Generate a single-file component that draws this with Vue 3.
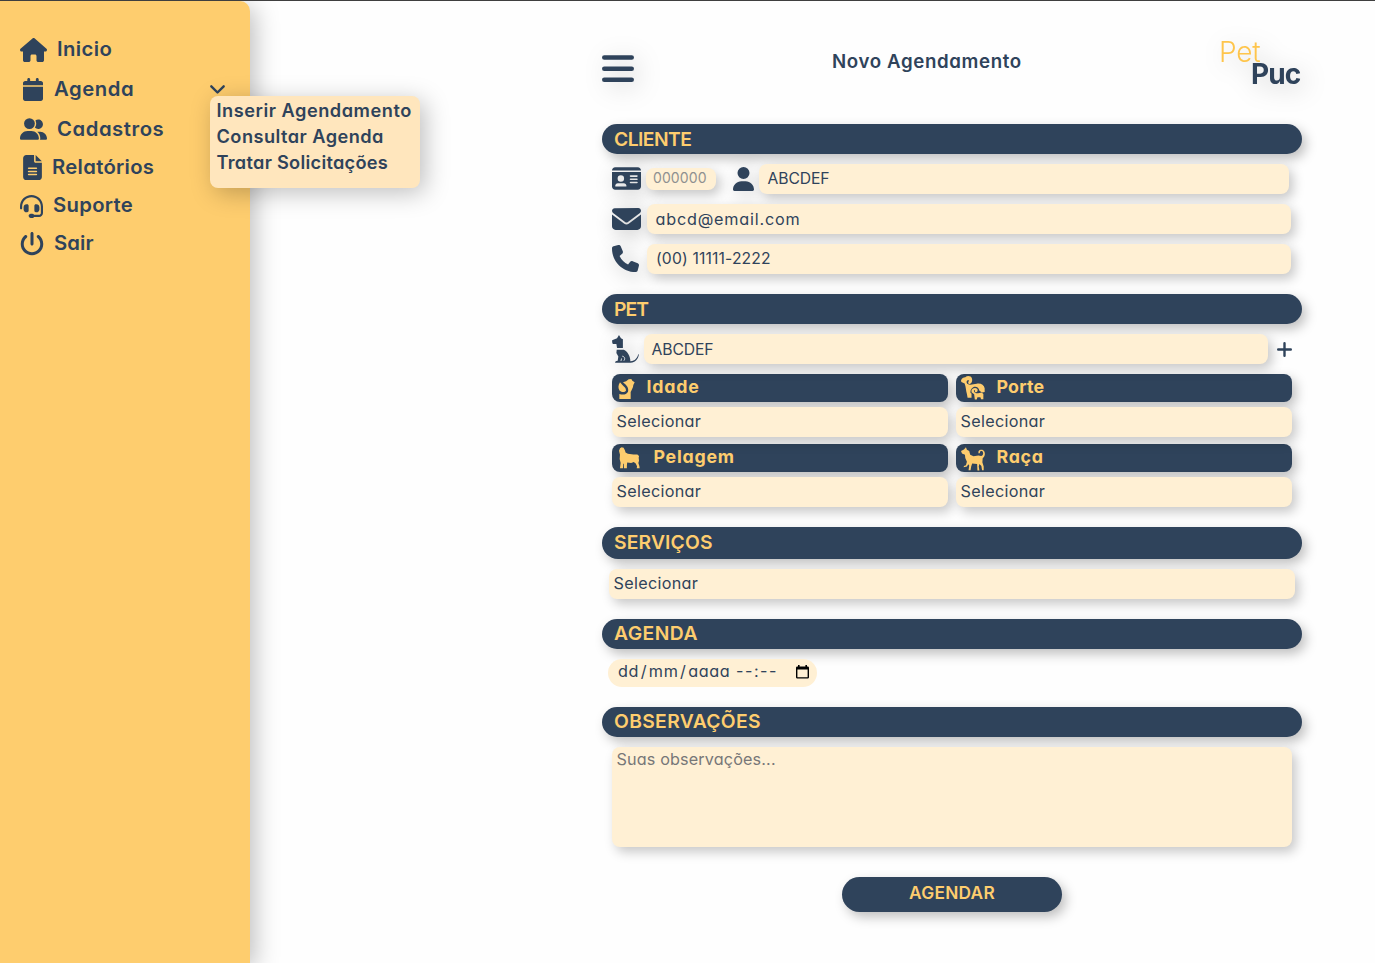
<script setup>
const menu = [
  { key: 'inicio', label: 'Inicio', view: '0 0 576 512', path: 'M575.8 255.5c0 18-15 32.1-32 32.1l-32 0 .7 160.2c0 2.7-.2 5.4-.5 8.1l0 16.2c0 22.1-17.9 40-40 40l-16 0c-1.1 0-2.2 0-3.3-.1c-1.4 .1-2.8 .1-4.2 .1L416 512l-24 0c-22.1 0-40-17.9-40-40l0-24 0-64c0-17.7-14.3-32-32-32l-64 0c-17.7 0-32 14.3-32 32l0 64 0 24c0 22.1-17.9 40-40 40l-24 0-31.9 0c-1.5 0-3-.1-4.5-.2c-1.2 .1-2.4 .2-3.6 .2l-16 0c-22.1 0-40-17.9-40-40l0-112c0-.9 0-1.9 .1-2.8l0-69.7-32 0c-18 0-32-14-32-32.1c0-9 3-17 10-24L266.4 8c7-7 15-8 22-8s15 2 21 7L564.8 231.5c8 7 12 15 11 24z' },
  { key: 'agenda', label: 'Agenda', open: true, view: '0 0 448 512', path: 'M96 32l0 32L48 64C21.5 64 0 85.5 0 112l0 48 448 0 0-48c0-26.5-21.5-48-48-48l-48 0 0-32c0-17.7-14.3-32-32-32s-32 14.3-32 32l0 32L160 64l0-32c0-17.7-14.3-32-32-32S96 14.3 96 32zM448 192L0 192 0 464c0 26.5 21.5 48 48 48l352 0c26.5 0 48-21.5 48-48l0-272z' },
  { key: 'cadastros', label: 'Cadastros', view: '0 0 640 512', path: 'M96 128a128 128 0 1 1 256 0A128 128 0 1 1 96 128zM0 482.3C0 383.8 79.8 304 178.3 304l91.4 0C368.2 304 448 383.8 448 482.3c0 16.4-13.3 29.7-29.7 29.7L29.7 512C13.3 512 0 498.7 0 482.3zM609.3 512l-137.8 0c5.4-9.4 8.6-20.3 8.6-32l0-8c0-60.7-27.1-115.2-69.8-151.8c2.4-.1 4.7-.2 7.1-.2l61.4 0C567.8 320 640 392.2 640 481.3c0 17-13.8 30.7-30.7 30.7zM432 256c-31 0-59-12.6-79.3-32.9C372.4 196.5 384 163.6 384 128c0-26.8-6.6-52.1-18.3-74.3C384.3 40.1 407.2 32 432 32c61.9 0 112 50.1 112 112s-50.1 112-112 112z' },
  { key: 'relatorios', label: 'Relatórios', view: '0 0 384 512', path: 'M64 0C28.7 0 0 28.7 0 64L0 448c0 35.3 28.7 64 64 64l256 0c35.3 0 64-28.7 64-64l0-288-128 0c-17.7 0-32-14.3-32-32L224 0 64 0zM256 0l0 128 128 0L256 0zM112 256l160 0c8.8 0 16 7.2 16 16s-7.2 16-16 16l-160 0c-8.8 0-16-7.2-16-16s7.2-16 16-16zm0 64l160 0c8.8 0 16 7.2 16 16s-7.2 16-16 16l-160 0c-8.8 0-16-7.2-16-16s7.2-16 16-16zm0 64l160 0c8.8 0 16 7.2 16 16s-7.2 16-16 16l-160 0c-8.8 0-16-7.2-16-16s7.2-16 16-16z' },
  { key: 'suporte', label: 'Suporte', view: '0 0 512 512', path: 'M256 48C141.1 48 48 141.1 48 256l0 40c0 13.3-10.7 24-24 24s-24-10.7-24-24l0-40C0 114.6 114.6 0 256 0S512 114.6 512 256l0 144.1c0 48.6-39.4 88-88.1 88L313.6 488c-8.3 14.3-23.8 24-41.6 24l-32 0c-26.5 0-48-21.5-48-48s21.5-48 48-48l32 0c17.8 0 33.3 9.7 41.6 24l110.4 .1c22.1 0 40-17.9 40-40L464 256c0-114.9-93.1-208-208-208zM144 208l16 0c17.7 0 32 14.3 32 32l0 112c0 17.7-14.3 32-32 32l-16 0c-35.3 0-64-28.7-64-64l0-48c0-35.3 28.7-64 64-64zm224 0c35.3 0 64 28.7 64 64l0 48c0 35.3-28.7 64-64 64l-16 0c-17.7 0-32-14.3-32-32l0-112c0-17.7 14.3-32 32-32l16 0z' },
  { key: 'sair', label: 'Sair', view: '0 0 512 512', path: 'M288 32c0-17.7-14.3-32-32-32s-32 14.3-32 32l0 224c0 17.7 14.3 32 32 32s32-14.3 32-32l0-224zM143.5 120.6c13.6-11.3 15.4-31.5 4.1-45.1s-31.5-15.4-45.1-4.1C49.7 115.4 16 181.8 16 256c0 132.5 107.5 240 240 240s240-107.5 240-240c0-74.2-33.8-140.6-86.6-184.6c-13.6-11.3-33.8-9.4-45.1 4.1s-9.4 33.8 4.1 45.1c38.9 32.3 63.5 81 63.5 135.4c0 97.2-78.8 176-176 176s-176-78.8-176-176c0-54.4 24.7-103.1 63.5-135.4z' },
]
</script>

<template>
  <div class="page">
    <nav class="sidebar">
      <div v-for="item in menu" :key="item.key" class="item" :class="item.key">
        <svg class="glyph" :viewBox="item.view"><path :d="item.path" /></svg>
        <span class="label">{{ item.label }}</span>
        <svg v-if="item.open" class="chevron" viewBox="0 0 15 9"><path d="M1.3 1.3 7.5 7.5 13.7 1.3" /></svg>
        <div v-if="item.open" class="submenu">
          <span class="s1">Inserir Agendamento</span>
          <span class="s2">Consultar Agenda</span>
          <span class="s3">Tratar Solicitações</span>
        </div>
      </div>
    </nav>

    <main class="panel">
      <header class="top">
        <svg class="burger" viewBox="0 0 32 28"><path d="M2.3 2.5H29.7M2.3 13.7H29.7M2.3 24.8H29.7" /></svg>
        <h1>Novo Agendamento</h1>
        <div class="logo"><span class="pet">Pet</span><span class="puc">Puc</span></div>
      </header>

      <h2 class="cliente"><span>CLIENTE</span></h2>
      <div class="row first">
        <svg class="ic card" viewBox="0 32 576 448"><path d="M0 96l576 0c0-35.3-28.7-64-64-64L64 32C28.7 32 0 60.7 0 96zm0 32L0 416c0 35.3 28.7 64 64 64l448 0c35.3 0 64-28.7 64-64l0-288L0 128zM64 405.3c0-29.5 23.9-53.3 53.3-53.3l117.3 0c29.5 0 53.3 23.9 53.3 53.3c0 5.9-4.8 10.7-10.7 10.7L74.7 416c-5.9 0-10.7-4.8-10.7-10.7zM176 192a64 64 0 1 1 0 128 64 64 0 1 1 0-128zm176 16c0-8.8 7.2-16 16-16l128 0c8.8 0 16 7.2 16 16s-7.2 16-16 16l-128 0c-8.8 0-16-7.2-16-16zm0 64c0-8.8 7.2-16 16-16l128 0c8.8 0 16 7.2 16 16s-7.2 16-16 16l-128 0c-8.8 0-16-7.2-16-16zm0 64c0-8.8 7.2-16 16-16l128 0c8.8 0 16 7.2 16 16s-7.2 16-16 16l-128 0c-8.8 0-16-7.2-16-16z" /></svg>
        <div class="field code">000000</div>
        <svg class="ic user" viewBox="0 0 448 512"><path d="M224 256A128 128 0 1 0 224 0a128 128 0 1 0 0 256zm-45.7 48C79.8 304 0 383.8 0 482.3C0 498.7 13.3 512 29.7 512l388.6 0c16.4 0 29.7-13.3 29.7-29.7C448 383.8 368.2 304 269.7 304l-91.4 0z" /></svg>
        <div class="field name">ABCDEF</div>
      </div>
      <div class="row second">
        <svg class="ic mail" viewBox="0 64 512 384"><path d="M48 64C21.5 64 0 85.5 0 112c0 15.1 7.1 29.3 19.2 38.4L236.8 313.6c11.4 8.5 27 8.5 38.4 0L492.8 150.4c12.1-9.1 19.2-23.3 19.2-38.4c0-26.5-21.5-48-48-48L48 64zM0 176L0 384c0 35.3 28.7 64 64 64l384 0c35.3 0 64-28.7 64-64l0-208L294.4 339.2c-22.8 17.1-54 17.1-76.8 0L0 176z" /></svg>
        <div class="field email">abcd@email.com</div>
      </div>
      <div class="row third">
        <svg class="ic phone" viewBox="0 0 512 512"><path d="M164.9 24.6c-7.7-18.6-28-28.5-47.4-23.2l-88 24C12.1 30.2 0 46 0 64C0 311.4 200.6 512 448 512c18 0 33.8-12.1 38.6-29.5l24-88c5.3-19.4-4.6-39.7-23.2-47.4l-96-40c-16.3-6.8-35.2-2.1-46.3 11.6L304.7 368C234.3 334.7 177.3 277.7 144 207.3L193.3 167c13.7-11.2 18.4-30 11.6-46.3l-40-96z" /></svg>
        <div class="field tel">(00) 11111-2222</div>
      </div>

      <h2 class="pet-title"><span>PET</span></h2>
      <div class="row pet-row">
        <svg class="ic dog" viewBox="0 0 82 86">
          <path d="M0 16 15 10 21 0 27 10 33 13V40H15L13 28H2L0 22Z" />
          <path d="M14 45H36C47 51 56 63 56 81H57C70 79 77 71 80 59L82 60C80 74 71 85 57 85H9C9 81 12 80 17 79L19 66 13 55Z" />
          <path class="cut" d="M27 80 29 72M36 79C41 73 38 66 31 65" />
        </svg>
        <div class="field pet-name">ABCDEF</div>
        <svg class="plus" viewBox="0 0 15 15"><path d="M7.5 1.2V13.8M1.2 7.5H13.8" /></svg>
      </div>

      <div class="grid">
        <section>
          <h3 class="idade">
            <svg viewBox="0 0 49 60"><path d="M5 10C-1 18-1 29 4 35C10 40 19 41 23 35C23 27 18 24 13 19C10 16 8 13 5 10Z" /><path d="M14 10C21 9 26 5 31 1L39 0 42 5 49 10 45 18C44 28 40 32 37 39V60H3V45C13 48 24 48 29 38C32 28 26 19 14 10Z" /></svg>
            <span>Idade</span>
          </h3>
          <div class="field select">Selecionar</div>
        </section>
        <section>
          <h3 class="porte">
            <svg viewBox="0 0 73 72"><path d="M0 13C2 5 8 3 13 3C19-2 31-1 33 6C36 15 32 23 24 24C21 21 21 17 25 14C19 9 14 17 19 23C28 29 37 24 48 23C60 21 70 26 72 37V48L64 50 56 44C54 34 45 30 37 34C30 38 28 45 29 51L32 53V66H20L18 54C15 44 15 32 11 22L1 18Z" /><path d="M32 42C36 36 43 34 49 38C53 43 49 50 43 49L42 45C43 42 40 41 39 44C40 51 47 53 52 52L63 50 68 54V70H61L59 64H50L48 71H42L40 55 32 49Z" /></svg>
            <span>Porte</span>
          </h3>
          <div class="field select">Selecionar</div>
        </section>
        <section>
          <h3 class="pelagem">
            <svg viewBox="0 0 64 66"><path d="M3 3 8 0 14 2 18 9 20 16 27 20 44 22 56 22 61 27 60 32 61 41 59 48 62 57 63 64H54L55 58 51 50 45 45 37 48 25 47 24 56 24 64H15L15 51 13 50 12 64H3L5 48 2 36 3 23 0 11Z" /></svg>
            <span>Pelagem</span>
          </h3>
          <div class="field select">Selecionar</div>
        </section>
        <section>
          <h3 class="raca">
            <svg viewBox="0 0 73 72"><path d="M0 12 9 7 15 0 18 8 25 12 28 23 38 28 53 25 61 27C69 26 69 15 64 12C59 10 56 14 58 18L54 19C50 11 58 6 65 8C75 12 75 27 66 34L65 46 69 59V70H64L62 57 56 51 54 59 56 71H50L49 51 34 50 31 59 29 70H23L25 56 22 52 18 59 8 61 9 57 15 55 18 44 13 33 12 23 3 19Z" /></svg>
            <span>Raça</span>
          </h3>
          <div class="field select">Selecionar</div>
        </section>
      </div>

      <h2 class="servicos"><span>SERVIÇOS</span></h2>
      <div class="field select service">Selecionar</div>

      <h2 class="agenda-title"><span>AGENDA</span></h2>
      <div class="date">
        <span class="d">dd<i>/</i>mm<i>/</i>aaaa</span><span class="t">--:--</span>
        <svg viewBox="0 0 13 14"><path fill-rule="evenodd" d="M2 0H3.6V1.4H9.4V0H11V1.4H11.6Q13 1.4 13 2.8V12.2Q13 13.6 11.6 13.6H1.4Q0 13.6 0 12.2V2.8Q0 1.4 1.4 1.4H2ZM1.4 4.6V12.2H11.6V4.6Z" /></svg>
      </div>

      <h2 class="obs-title"><span>OBSERVAÇÕES</span></h2>
      <div class="field notes">Suas observações...</div>

      <button class="submit">AGENDAR</button>
    </main>
  </div>
</template>

<style>
body { background: #fefefe; }
</style>

<style scoped>
.page { display: flex; height: 963px; box-sizing: border-box; border-top: 1px solid #3f3f3f; overflow: hidden; font-family: Inter, "Open Sans", sans-serif; font-feature-settings: "cv11"; color: #2f435b; }
svg { display: block; flex: none; fill: currentColor; overflow: visible; }

.sidebar { position: relative; z-index: 1; flex: none; width: 250px; padding-top: 28px; box-sizing: border-box; border-radius: 0 10px 0 0; background: #fecd6e; box-shadow: 5px 5px 25px rgba(0, 0, 0, .25); }
.item { position: relative; display: flex; align-items: center; height: 38px; padding-left: 20px; font-size: 20.3px; font-weight: 600; }
.inicio, .agenda { height: 40px; }
.inicio .glyph { width: 27px; height: 24px; margin: 1px 10px 0 0; }
.inicio .label { letter-spacing: .4px; }
.agenda .glyph { width: 20px; height: 23px; margin: 0 11px 0 3px; }
.agenda .label { letter-spacing: .55px; }
.cadastros { height: 40px; }
.cadastros .glyph { width: 27px; height: 22px; margin-right: 10px; }
.cadastros .label { letter-spacing: .55px; }
.relatorios { height: 36px; }
.relatorios .glyph { width: 19px; height: 25px; margin: 1px 10px 0 3px; }
.relatorios .label { letter-spacing: .3px; }
.suporte .glyph { width: 23px; height: 23px; margin: 2px 10px 0 0; }
.suporte { height: 40px; }
.suporte .label { letter-spacing: .3px; }
.sair { height: 36px; }
.sair .glyph { width: 24px; height: 24px; margin: 1px 10px 0 0; }
.sair .label { letter-spacing: .1px; }
.label { line-height: 24px; }
.chevron { position: absolute; left: 210px; top: 16px; width: 15px; height: 9px; }
.chevron path { fill: none; stroke: currentColor; stroke-width: 2.4; stroke-linecap: round; stroke-linejoin: round; }
.submenu { position: absolute; left: 210px; top: 27px; display: flex; flex-direction: column; width: 210px; height: 92px; padding: 1px 0 0 6.5px; box-sizing: border-box; border-radius: 8px; background: #ffe6bd; box-shadow: 5px 5px 25px rgba(0, 0, 0, .25); font-size: 18.2px; line-height: 26px; white-space: nowrap; }
.s1 { letter-spacing: .52px; }
.s2 { letter-spacing: .46px; }
.s3 { letter-spacing: .28px; }

.panel { width: 700px; margin-left: 352px; display: flex; flex-direction: column; }
.top { display: flex; height: 123px; }
.burger { width: 32px; height: 28px; margin: 54px 0 0 -.5px; filter: drop-shadow(5px 5px 12px rgba(0, 0, 0, .2)); }
.burger path { fill: none; stroke: currentColor; stroke-width: 4.6; stroke-linecap: round; }
h1 { margin: 48px 0 0 198.5px; font-size: 18.7px; line-height: 26px; font-weight: 600; letter-spacing: .62px; white-space: nowrap; }
.logo { display: flex; flex-direction: column; margin: 40px 0 0 auto; width: 83px; font-size: 28px; line-height: 22px; filter: drop-shadow(5px 5px 12px rgba(0, 0, 0, .2)); }
.pet { color: #fec54c; font-weight: 300; letter-spacing: -.2px; }
.puc { margin-left: 32px; font-weight: 700; letter-spacing: -.9px; }

h2 { flex: none; height: 30px; margin: 0; padding-left: 12px; border-radius: 16px; background: #2f435b; color: #fecd6e; box-shadow: 4px 5px 12px rgba(0, 0, 0, .25); font-size: 19.3px; font-weight: 600; line-height: 31px; }
.cliente { letter-spacing: -.55px; }
.pet-title { margin-top: 20px; letter-spacing: -.9px; }
.servicos { height: 32px; margin-top: 20px; letter-spacing: .15px; }
.agenda-title { margin-top: 20px; letter-spacing: .45px; line-height: 29px; }
.obs-title { margin-top: 20px; letter-spacing: .35px; line-height: 29px; }

.field { position: relative; box-sizing: border-box; height: 30px; border-radius: 8px; background: #fff0d4; box-shadow: 4px 5px 12px rgba(0, 0, 0, .22); font-size: 16.2px; line-height: 29px; white-space: nowrap; }
.row { display: flex; align-items: center; height: 30px; margin-top: 10px; padding-left: 9.5px; }
.ic { filter: drop-shadow(4px 4px 10px rgba(0, 0, 0, .22)); }
.card { width: 29px; height: 23px; margin-top: -1px; }
.code { width: 70px; height: 22px; margin-left: 5.5px; padding-left: 7px; line-height: 20px; font-size: 14px; letter-spacing: .1px; color: #8f9090; }
.user { width: 21px; height: 24px; margin-left: 17px; }
.name { width: 530px; margin-left: 5px; padding-left: 8.5px; font-size: 15.7px; letter-spacing: -.1px; }
.mail { width: 29px; height: 22px; }
.email { width: 644px; margin-left: 6.5px; padding-left: 8.5px; letter-spacing: .8px; line-height: 31px; }
.phone { width: 27px; height: 27px; margin-top: -2px; }
.tel { width: 644px; margin-left: 8.5px; padding-left: 9px; font-size: 15.7px; letter-spacing: .15px; }
.dog { width: 27px; height: 28px; }
.dog .cut { fill: none; stroke: #fefefe; stroke-width: 2.5; }
.pet-name { width: 624px; margin-left: 5.5px; padding-left: 7.5px; font-size: 15.7px; letter-spacing: -.1px; line-height: 31px; }
.plus { width: 15px; height: 15px; margin-left: 9px; }
.plus path { fill: none; stroke: currentColor; stroke-width: 2.4; stroke-linecap: round; }

.grid { display: grid; grid-template-columns: 336px 336px; gap: 7px 8px; margin: 10px 0 0 10px; }
h3 { display: flex; align-items: center; height: 28px; margin: 0 0 5px; border-radius: 8px; background: #2f435b; color: #fecd6e; box-shadow: 4px 5px 12px rgba(0, 0, 0, .25); font-size: 17.8px; font-weight: 700; line-height: 26px; }
h3 span { padding-bottom: 2px; }
.idade { letter-spacing: .8px; }
.idade svg { width: 17px; height: 20px; margin: 1px 11.5px 0 6px; }
.porte { letter-spacing: .2px; }
.porte svg, .raca svg { width: 24px; height: 24px; margin: 0 11.5px 0 5px; }
.pelagem { letter-spacing: .75px; }
.pelagem svg { width: 21px; height: 22px; margin: 0 13.5px 0 7px; }
.raca { letter-spacing: .7px; }
.raca svg { margin-top: 1px; }
.select { padding-left: 4.5px; letter-spacing: .3px; }
.service { width: 686px; margin: 10px 0 0 7px; }
.date { display: flex; align-items: center; width: 209px; height: 28px; margin: 10px 0 0 6px; padding-left: 10px; box-sizing: border-box; border-radius: 14px; background: #fff0d4; font-size: 16.2px; line-height: 26px; }
.date span { padding-bottom: 4px; }
.date i { font-style: normal; margin: 0 1.6px; }
.d { width: 118px; letter-spacing: .65px; white-space: nowrap; }
.t { width: 60px; letter-spacing: 1.5px; }
.date svg { width: 13px; height: 14px; margin-top: -2px; color: #000; }
.notes { width: 680px; height: 100px; margin: 10px 0 0 10px; padding-left: 4.5px; line-height: 25px; letter-spacing: .14px; color: #777778; }
.submit { width: 220px; height: 35px; margin: 30px 0 0 240px; padding: 0 0 4px; border: 0; border-radius: 18px; background: #2f435b; color: #fecd6e; box-shadow: 4px 5px 12px rgba(0, 0, 0, .25); font: 600 17.3px Inter, sans-serif; letter-spacing: .25px; }
</style>
